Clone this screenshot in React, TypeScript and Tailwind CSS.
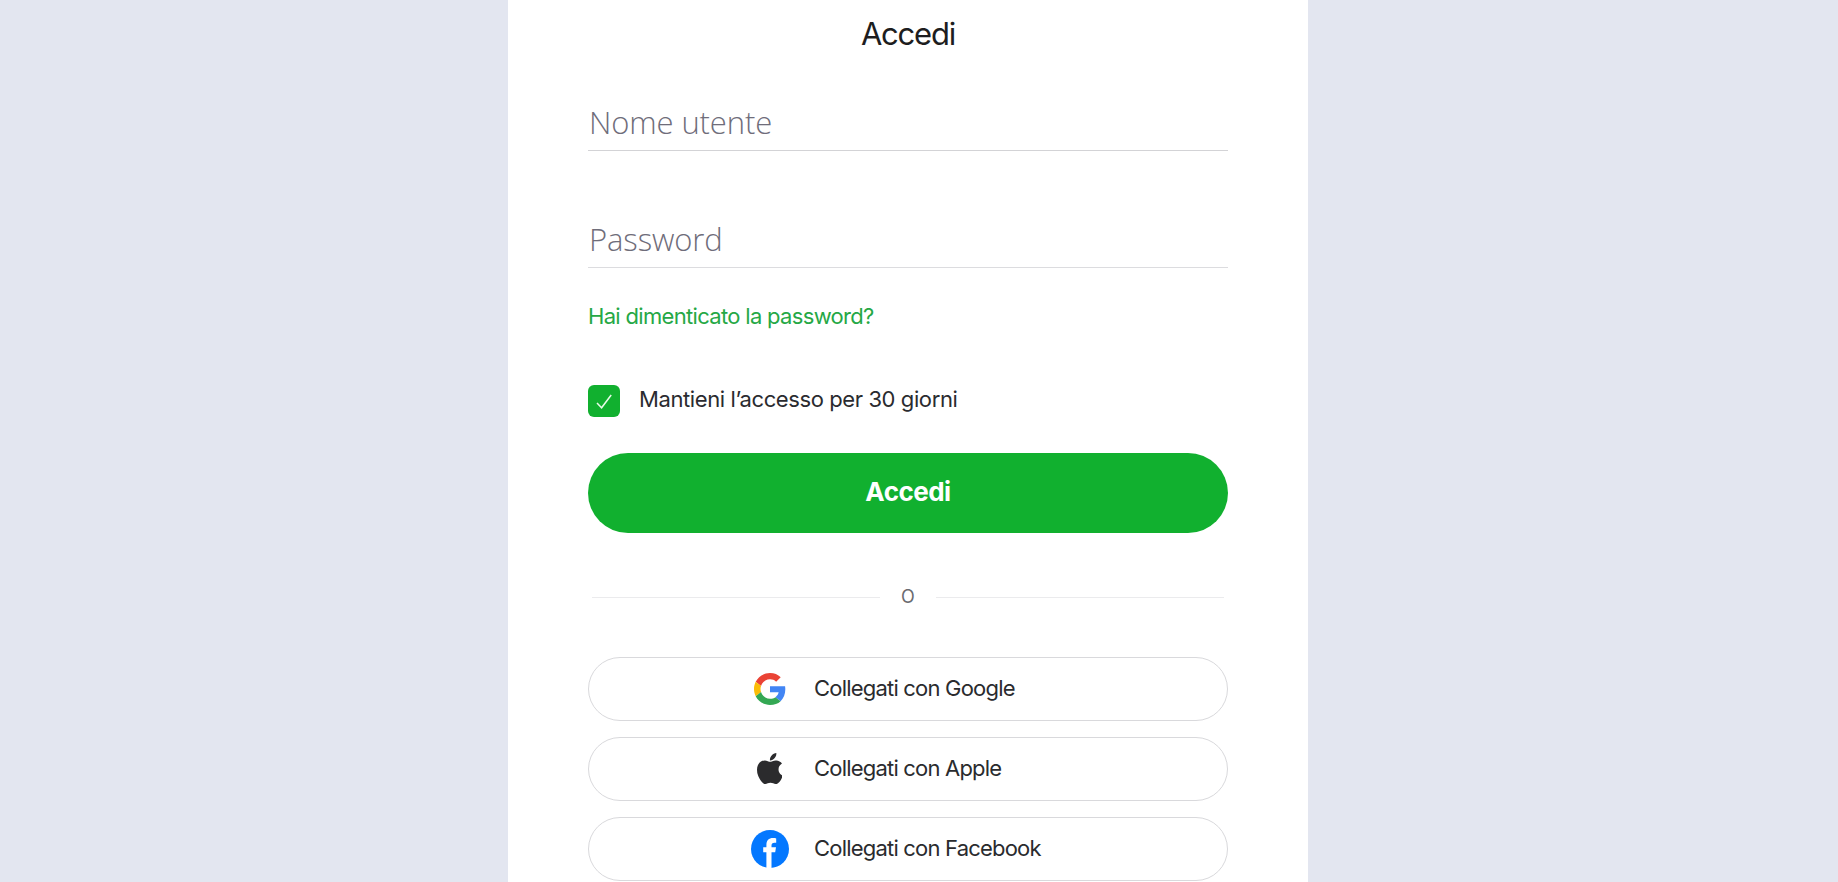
import type { ReactNode } from "react";

function GoogleIcon() {
  return (
    <svg viewBox="0 0 48 48" className="h-8 w-8">
      <path fill="#EA4335" d="M24 9.5c3.54 0 6.71 1.22 9.21 3.6l6.85-6.85C35.9 2.38 30.47 0 24 0 14.62 0 6.51 5.38 2.56 13.22l7.98 6.19C12.43 13.72 17.74 9.5 24 9.5z" />
      <path fill="#4285F4" d="M46.98 24.55c0-1.57-.15-3.09-.38-4.55H24v9.02h12.94c-.58 2.96-2.26 5.48-4.78 7.18l7.73 6c4.51-4.18 7.09-10.36 7.09-17.65z" />
      <path fill="#FBBC05" d="M10.53 28.59c-.48-1.45-.76-2.99-.76-4.59s.27-3.14.76-4.59l-7.98-6.19C.92 16.46 0 20.12 0 24c0 3.88.92 7.54 2.56 10.78l7.97-6.19z" />
      <path fill="#34A853" d="M24 48c6.48 0 11.93-2.13 15.89-5.81l-7.73-6c-2.15 1.45-4.92 2.3-8.16 2.3-6.26 0-11.57-4.22-13.47-9.91l-7.98 6.19C6.51 42.62 14.62 48 24 48z" />
    </svg>
  );
}

function AppleIcon() {
  return (
    <svg viewBox="4 32 365 448" className="mr-0.5 mb-0.5 h-[31px] w-[25px] fill-[#2b2b2d]" preserveAspectRatio="none">
      <path d="M318.7 268.7c-.2-36.7 16.4-64.4 50-84.8-18.8-26.9-47.2-41.7-84.7-44.6-35.5-2.8-74.3 20.7-88.5 20.7-15 0-49.4-19.7-76.4-19.7C63.3 141.2 4 184.8 4 273.5q0 39.3 14.4 81.2c12.8 36.7 59 126.7 107.2 125.2 25.2-.6 43-17.9 75.8-17.9 31.8 0 48.3 17.9 76.4 17.9 48.6-.7 90.4-82.5 102.6-119.3-65.2-30.7-61.7-90-61.7-91.9zm-56.6-164.2c27.3-32.4 24.8-61.9 24-72.5-24.1 1.4-52 16.4-67.9 34.9-17.5 19.8-27.8 44.3-25.6 71.9 26.1 2 49.9-11.4 69.5-34.3z" />
    </svg>
  );
}

function FacebookIcon() {
  return (
    <svg viewBox="0 0 38 38" className="h-[38px] w-[38px]">
      <circle cx="19" cy="19" r="19" fill="#0478ff" />
      <path
        fill="#fff"
        d="M15.4 38V22.2h-3.2v-4.9h3.2v-2.2c0-4.8 2.2-7 6.8-7 .9 0 2.4.2 3 .3v4.3h-1.6c-2.3 0-3.1.9-3.1 3.1v1.5h4.5l-.8 4.9h-3.7V38z"
      />
    </svg>
  );
}

function SocialButton({ icon, children }: { icon: ReactNode; children: ReactNode }) {
  return (
    <button className="flex h-16 w-full items-center rounded-full border border-[#d9d9dc] pl-[155px] text-left text-[22px] leading-7 tracking-[-0.8px] text-[#2a2b2e]">
      <span className="flex w-[52px] justify-center">{icon}</span>
      <span className="ml-[18px] pb-0.5">{children}</span>
    </button>
  );
}

export default function App() {
  return (
    <div className="flex h-[882px] overflow-hidden bg-[#e3e6f0] pl-[508px] font-['Inter',sans-serif]">
      <main className="flex w-[800px] flex-col bg-white px-20">
        <h1 className="mt-[14px] text-center text-[31px] leading-10 tracking-[-1.2px] text-[#1d1d20]">Accedi</h1>
        <input
          placeholder="Nome utente"
          className="mt-[42px] h-[55px] w-full border-b border-[#d3d3d6] pb-0.5 pl-px font-['Open_Sans',sans-serif] text-[31px] font-light tracking-[-0.12px] outline-none placeholder:text-[#6f6d7a] placeholder:opacity-100"
        />
        <input
          type="text"
          placeholder="Password"
          className="mt-[62px] h-[55px] w-full border-b border-[#dcdcdf] pb-0.5 pl-px font-['Open_Sans',sans-serif] text-[31px] font-light tracking-[-0.12px] outline-none placeholder:text-[#6f6d7a] placeholder:opacity-100"
        />
        <a className="mt-[34px] self-start text-[22px] leading-7 tracking-[-0.68px] text-[#25a845]">
          Hai dimenticato la password?
        </a>
        <label className="mt-[55px] flex h-8 items-center text-[22px] leading-8 tracking-[-0.4px] text-[#2a2b2f]">
          <span className="flex h-8 w-8 items-center justify-center rounded-[6px] bg-[#11b02f]">
            <svg viewBox="0 0 32 32" className="h-8 w-8" fill="none" stroke="#e9fbe9" strokeWidth="1.5">
              <path d="M9 18l4.6 4.8L23.2 10" />
            </svg>
          </span>
          <span className="ml-[19px] pb-1">Mantieni l’accesso per 30 giorni</span>
        </label>
        <button className="mt-9 h-20 w-full shrink-0 rounded-full bg-[#11b02f] pb-1 text-[26px] font-bold tracking-[-0.5px] text-white">
          Accedi
        </button>
        <div className="mt-[54px] flex h-5 items-center px-1 text-[18px] text-[#6b6b70]">
          <span className="h-px flex-1 bg-[#ebebed]" />
          <span className="w-14 pb-0.5 text-center">O</span>
          <span className="h-px flex-1 bg-[#ebebed]" />
        </div>
        <div className="mt-[50px] flex flex-col gap-4">
          <SocialButton icon={<GoogleIcon />}>Collegati con Google</SocialButton>
          <SocialButton icon={<AppleIcon />}>Collegati con Apple</SocialButton>
          <SocialButton icon={<FacebookIcon />}>Collegati con Facebook</SocialButton>
        </div>
      </main>
    </div>
  );
}
